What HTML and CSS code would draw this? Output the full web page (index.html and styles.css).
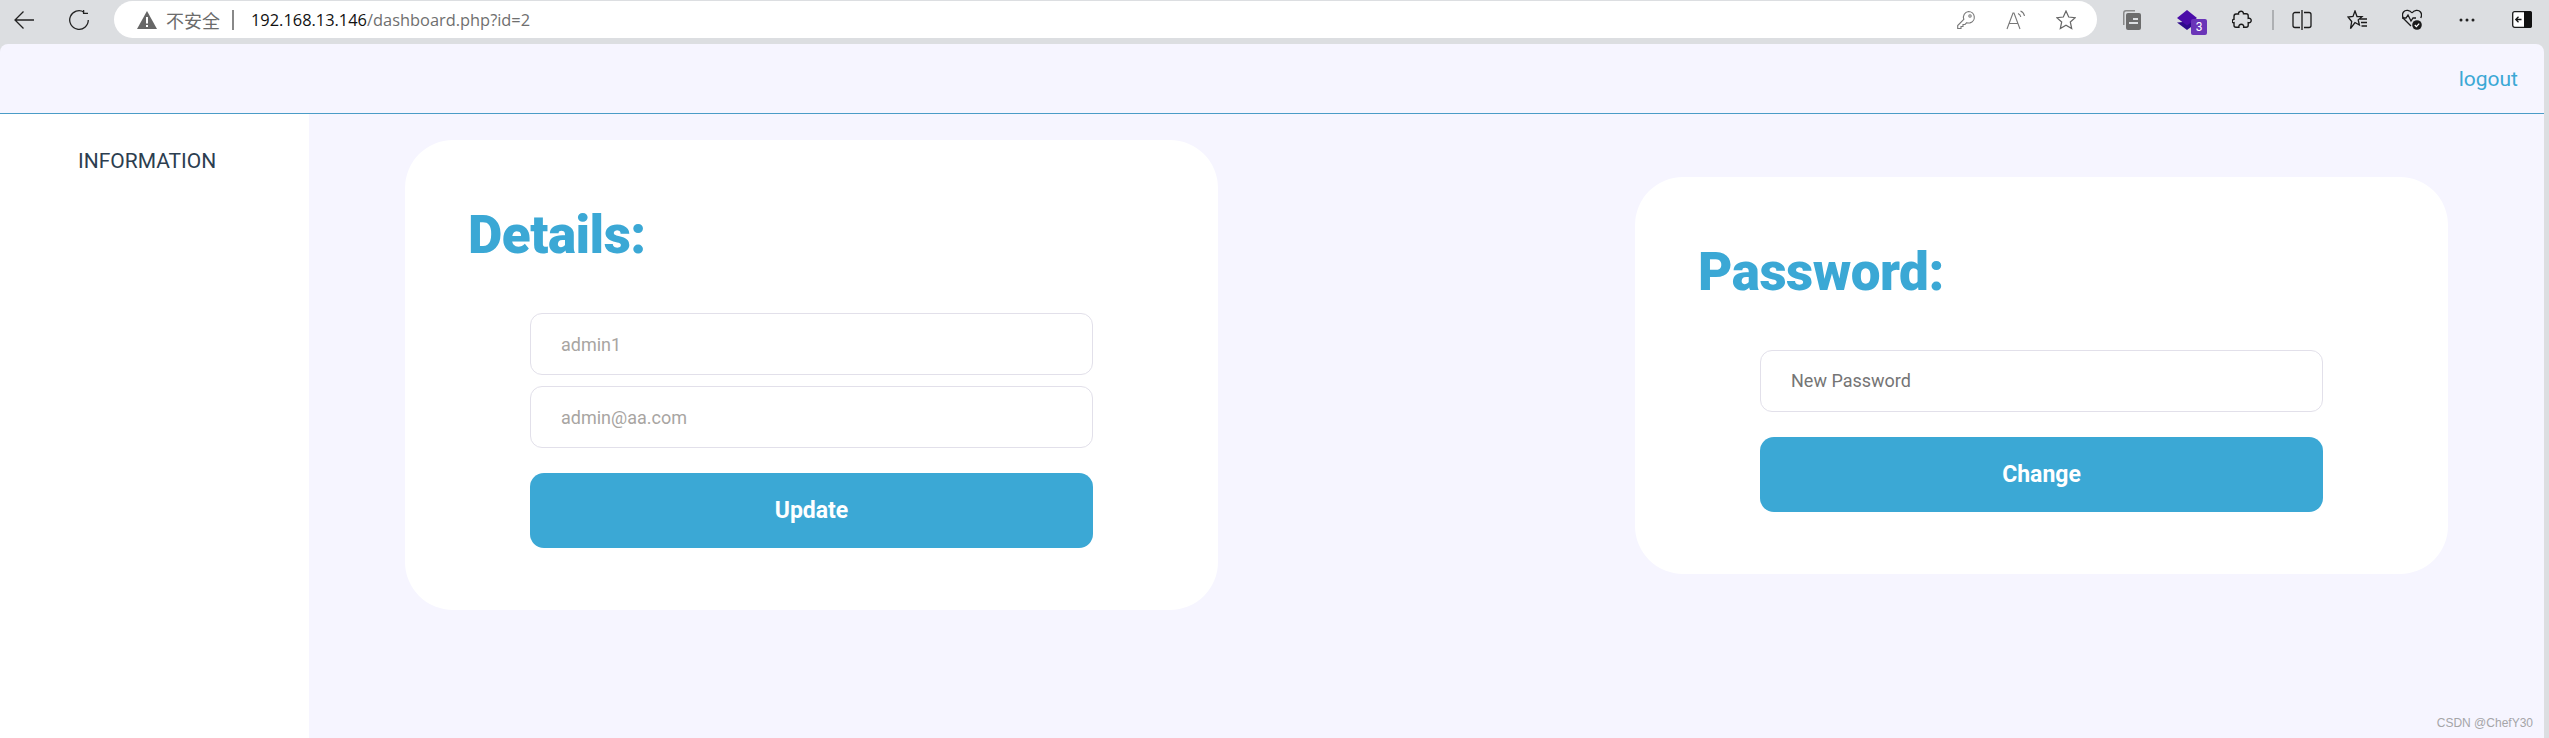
FILE: index.html
```html
<!DOCTYPE html>
<html lang="zh">
<head>
  <meta charset="UTF-8">
  <meta name="viewport" content="width=device-width, initial-scale=1.0">
  <title>dashboard</title>
  <link rel="stylesheet" href="styles.css">
</head>
<body>
  <!-- browser toolbar -->
  <div class="toolbar">
    <svg class="nav-back" width="20" height="20" viewBox="0 0 20 20" fill="none" stroke="#222" stroke-width="1.3"><path d="M20 10H1M9.5 1.5 1 10l8.5 8.5"/></svg>
    <svg class="nav-reload" width="20" height="20" viewBox="0 0 20 20" fill="none" stroke="#222" stroke-width="1.3"><path d="M15 2.2A9.3 9.3 0 1 0 19.3 10"/><path d="M14.6 -1V3.4H19"/></svg>
    <div class="address">
      <svg class="warn" width="20" height="18" viewBox="0 0 20 18"><path d="M10 0 20 18H0Z" fill="#666"/><rect x="9" y="6" width="2" height="6.5" fill="#fff"/><rect x="9" y="14" width="2" height="2" fill="#fff"/></svg>
      <span class="unsafe">不安全</span>
      <span class="sep"></span>
      <span class="url"><span class="host">192.168.13.146</span>/dashboard.php?id=2</span>
      <div class="address-icons">
        <span class="addr-btn"><svg width="20" height="20" viewBox="0 0 20 20" fill="none" stroke="#777" stroke-width="1.1"><path d="M12.5 1.5a5.8 5.8 0 0 1 1.5 11.4 5.8 5.8 0 0 1-3.2-.2L9 14.5H7v2H5v2H1.7v-3l6.1-6.2a5.8 5.8 0 0 1 4.7-7.8Z"/><circle cx="14" cy="6" r="1.2"/></svg></span>
        <span class="addr-btn"><svg width="20" height="20" viewBox="0 0 20 20" fill="none" stroke="#777" stroke-width="1.1"><path d="M1 19 7 3h1l6 16M3.2 13.5h8.6"/><path d="M12 3.5c1.6.6 2.5 1.8 2.8 3.5M14.500 1c2 .8 3.500 2.600 4 5"/></svg></span>
        <span class="addr-btn"><svg width="20" height="20" viewBox="0 0 20 20" fill="none" stroke="#666" stroke-width="1.2"><path d="m10 1 2.700 6 6.500.7-4.900 4.300 1.400 6.500L10 15.200 4.300 18.500 5.700 12 .8 7.700 7.300 7Z"/></svg></span>
      </div>
    </div>
    <div class="tools">
      <span class="tool"><svg width="20" height="20" viewBox="0 0 20 20"><path d="M1 15V3a3 3 0 0 1 3-3h9v1.500H4A1.500 1.500 0 0 0 2.500 3v12Z" fill="#8a8a8a"/><rect x="4" y="3" width="15" height="17" rx="2" fill="#6c6c6c"/><path d="M11 8h5v2h-5zM7 12h9v2H7z" fill="#dcdee1"/></svg></span>
      <span class="tool tool-ext">
        <svg width="20" height="22" viewBox="0 0 20 22"><path d="M0 13.500 10 21l8-6V12Z" fill="#2d0a8c"/><path d="M10 1 20 9 10 16.500 0 9Z" fill="#4a0ca8"/></svg>
        <span class="ext-badge">3</span>
      </span>
      <span class="tool"><svg width="20" height="20" viewBox="0 0 20 20" fill="none" stroke="#1a1a1a" stroke-width="1.4"><path d="M8 1.500c2-.8 3.500.5 3.500 2.300h2.700c1.200 0 2 .8 2 2v2.500c2-.5 3 .8 3 2.200s-1 2.700-3 2.200v2.500c0 1.200-.8 2-2 2h-2.500c.3-2-1-3-2.400-3s-2.700 1-2.400 3H4c-1.200 0-2-.8-2-2v-2.500C.2 13.200-.2 11 .8 9.800c.3-.4.800-.6 1.200-.6V6.500c0-1.300.8-2.500 2-2.500h2.500C6.300 3 6.800 2 8 1.500Z"/></svg></span>
      <span class="tool-sep"></span>
      <span class="tool"><svg width="20" height="20" viewBox="0 0 20 20" fill="none" stroke="#1a1a1a" stroke-width="1.300"><path d="M8 2.500H3a2 2 0 0 0-2 2v11a2 2 0 0 0 2 2h5M12 2.500h5a2 2 0 0 1 2 2v11a2 2 0 0 1-2 2h-5M10 0v20"/></svg></span>
      <span class="tool"><svg width="20" height="20" viewBox="0 0 20 20" fill="none" stroke="#1a1a1a" stroke-width="1.300"><path d="M8 1 10 6.500l5 .2-3.800 3.300 1.200 5L8 12.500 3.500 18.500l1.200-7L1 7l5-.5Z"/><path d="M13 9h7M14 12.500h6M14.500 16h5.500"/></svg></span>
      <span class="tool"><svg width="20" height="21" viewBox="0 0 20 21" fill="none" stroke="#1a1a1a" stroke-width="1.300"><path d="M10 4C8 1 3.500.5 1.500 3 0 5 .5 8 2 10l7 7M10 4c2-3 6.500-3.500 8.500-1 1.500 2 1 4.500.2 6"/><path d="M0 9h4l2-3 3 6 2-3h3"/><circle cx="15" cy="16" r="4.800" fill="#1a1a1a" stroke="none"/><path d="m12.800 16 1.600 1.600 2.800-3" stroke="#fff"/></svg></span>
      <span class="tool"><svg width="16" height="4" viewBox="0 0 16 4" fill="#222"><circle cx="2" cy="2" r="1.500"/><circle cx="8" cy="2" r="1.500"/><circle cx="14" cy="2" r="1.500"/></svg></span>
      <span class="tool"><svg width="20" height="17" viewBox="0 0 20 17"><rect x=".7" y=".7" width="18.600" height="15.600" rx="2" fill="#fff" stroke="#1a1a1a" stroke-width="1.300"/><path d="M12 0h6a2 2 0 0 1 2 2v13a2 2 0 0 1-2 2h-6Z" fill="#111"/><path d="M9.500 8.500H4M6.500 5.800 3.800 8.500l2.700 2.700" fill="none" stroke="#111" stroke-width="1.300"/></svg></span>
    </div>
  </div>

  <div class="page">
    <div class="topbar">
      <a class="logout" href="#">logout</a>
    </div>
    <div class="layout">
      <div class="sidebar">
        <a class="side-link" href="#">INFORMATION</a>
      </div>
      <div class="content">
        <div class="cards">
          <div class="card">
            <h2>Details:</h2>
            <form class="form">
              <input class="field" type="text" placeholder="admin1">
              <input class="field" type="text" placeholder="admin@aa.com">
              <button class="btn" type="button">Update</button>
            </form>
          </div>
          <div class="card">
            <h2>Password:</h2>
            <form class="form">
              <input class="field field-new" type="password" placeholder="New Password">
              <button class="btn" type="button">Change</button>
            </form>
          </div>
        </div>
      </div>
    </div>
    <div class="watermark">CSDN @ChefY30</div>
  </div>
</body>
</html>
```

FILE: styles.css
```css
* {
  box-sizing: border-box;
}
html, body {
  height: 100%;
}
body {
  margin: 0;
  background-color: #dcdee1;
  font-family: Roboto, sans-serif;
  overflow: hidden;
  display: flex;
  flex-direction: column;
}
.toolbar {
  height: 44px;
  flex: none;
  display: flex;
  align-items: center;
  padding: 0 0 5px 14px;
}
.nav-reload {
  margin-left: 35px;
}
.address {
  margin-left: 25px;
  width: 1984px;
  height: 37px;
  background-color: #fff;
  border-radius: 19px;
  display: flex;
  align-items: center;
  padding: 0 6px 0 23px;
}
.unsafe {
  margin-left: 9px;
  font-family: "Noto Sans CJK SC", sans-serif;
  font-size: 18px;
  color: #6b6b6b;
}
.sep {
  width: 2px;
  height: 20px;
  background-color: #888;
  margin: 0 17px 0 12px;
}
.url {
  font-family: "Open Sans", sans-serif;
  font-size: 16.4px;
  color: #6f6f6f;
}
.host {
  color: #111;
}
.address-icons {
  margin-left: auto;
  display: flex;
}
.addr-btn {
  width: 50px;
  display: flex;
  justify-content: center;
}
.tools {
  display: flex;
  align-items: center;
  margin-left: 7.5px;
}
.tool {
  width: 55px;
  display: flex;
  justify-content: center;
  align-items: center;
  position: relative;
}
.tool-sep {
  width: 2px;
  height: 20px;
  background-color: #aeb0b3;
  margin-left: 3px;
}
.ext-badge {
  position: absolute;
  left: 32px;
  top: 10px;
  width: 16px;
  height: 16px;
  border-radius: 2px;
  background-color: #6a35b8;
  color: #fff;
  font-size: 12px;
  line-height: 16px;
  text-align: center;
}
.page {
  flex: 1;
  margin-right: 5px;
  background-color: #f6f5ff;
  border-radius: 8px 8px 0 0;
  display: flex;
  flex-direction: column;
  position: relative;
  overflow: hidden;
}
.topbar {
  height: 70px;
  flex: none;
  border-bottom: 1px solid #4a9cc7;
  display: flex;
  justify-content: flex-end;
  align-items: center;
  padding-right: 26px;
}
.logout {
  color: #3ba8d5;
  font-size: 21px;
  text-decoration: none;
}
.layout {
  flex: 1;
  display: flex;
}
.sidebar {
  width: 309px;
  flex: none;
  background-color: #fff;
  padding: 35px 0 0 78px;
}
.side-link {
  color: #2c3e50;
  font-size: 21px;
  text-decoration: none;
}
.content {
  flex: 1;
  padding: 26px 96px 0;
}
.cards {
  display: flex;
  justify-content: space-between;
  align-items: center;
}
.card {
  width: 813px;
  background-color: #fff;
  border-radius: 48px;
  padding: 65px 0 62px 63px;
}
.card h2 {
  margin: 0 0 48px;
  color: #3ba8d5;
  font-size: 53px;
  font-weight: 900;
  line-height: 60px;
  letter-spacing: -.5px;
}
.form {
  margin-left: 62px;
  width: 563px;
  display: flex;
  flex-direction: column;
}
.field {
  height: 62px;
  margin-bottom: 11px;
  border: 1.5px solid #e2e0ea;
  border-radius: 12px;
  padding: 0 30px;
  font-family: Roboto, sans-serif;
  font-size: 18px;
  background-color: #fff;
}
.field::placeholder {
  color: #a8a5a2;
}
.field-new::placeholder {
  color: #757575;
}
.btn {
  height: 75px;
  margin-top: 14px;
  border: none;
  border-radius: 14px;
  background-color: #3ba8d5;
  color: #fff;
  font-family: Roboto, sans-serif;
  font-size: 23px;
  font-weight: 700;
}
.watermark {
  position: absolute;
  right: 11px;
  bottom: 8px;
  color: #a5a5a8;
  font-family: "Liberation Sans", sans-serif;
  font-size: 12px;
}
```
